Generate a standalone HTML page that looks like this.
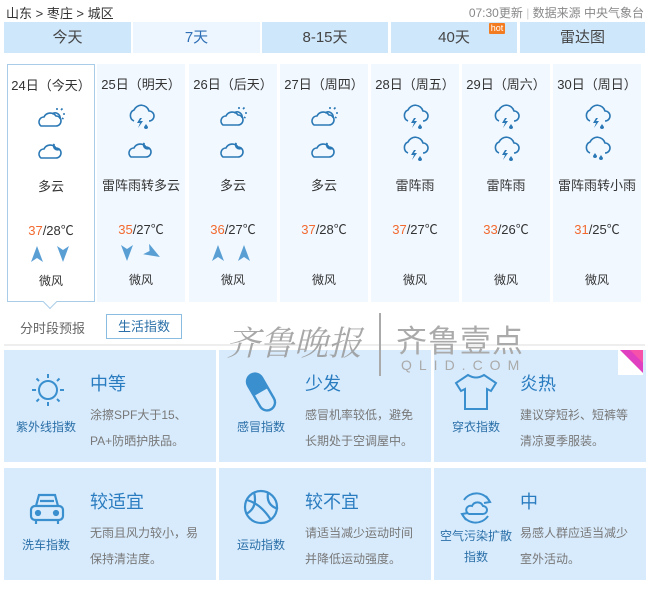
<!DOCTYPE html>
<html><head><meta charset="utf-8"><style>
*{margin:0;padding:0;box-sizing:border-box}
body{width:650px;height:590px;background:#fff;font-family:"Liberation Sans","Noto Sans CJK SC",sans-serif;color:#333;position:relative;overflow:hidden}
.a{position:absolute}
.crumb{left:6px;top:3px;font-size:13px;color:#333}
.upd{right:6px;top:4px;font-size:12px;color:#888}
.tab{top:22px;height:31px;background:#cfe7fb;text-align:center;line-height:31px;font-size:15px;color:#444}
.card{top:64px;width:88px;height:238px;background:#f1f8ff;text-align:center}
.card .d{position:absolute;top:10px;left:0;right:0;font-size:13px;color:#333}
.card .w{position:absolute;top:111px;left:0;right:0;font-size:13px}
.card .t{position:absolute;top:155px;left:0;right:0;font-size:13px}
.card .t b{font-weight:normal;color:#f26a2f}
.card .wd{position:absolute;top:207px;left:0;right:0;font-size:12px}
.card .ar{position:absolute;top:181px;left:0;right:0;height:16px}
.ic{position:absolute;left:50%;margin-left:-16px}
.box{background:#d8ebfc;width:212px;height:112px}
.box .n{position:absolute;left:0;width:84px;text-align:center;font-size:12px;color:#2a6fa8}
.box .h{position:absolute;left:86px;top:20px;font-size:18px;color:#2a7cc0}
.box .p{position:absolute;left:86px;top:52px;font-size:12px;color:#777;line-height:26px;width:118px}
.box svg{position:absolute}
</style></head><body>
<svg width="0" height="0" style="position:absolute">
<defs>
<symbol id="cs" viewBox="0 0 32 24"><g fill="none" stroke="#2a78b5" stroke-width="1.6"><path d="M6 21h15a5 5 0 0 0 0-10 7 7 0 0 0-12 1 5 5 0 0 0-3 9z"/><path d="M17 9a5 5 0 0 1 8 5"/><path d="M22 3v2M28 9h2M26 5l1.5-1.5M27 13l1.5 1"/></g></symbol>
<symbol id="cm" viewBox="0 0 32 24"><g fill="none" stroke="#2a78b5" stroke-width="1.6"><path d="M6 21h15a5 5 0 0 0 0-10 7 7 0 0 0-12 1 5 5 0 0 0-3 9z"/><path d="M19 9a4 4 0 0 0 6 3 4 4 0 0 1-6-5z"/></g></symbol>
<symbol id="th" viewBox="0 0 32 28"><g fill="none" stroke="#2a78b5" stroke-width="1.6"><path d="M9 19a6 6 0 0 1 0-11 8 8 0 0 1 15 1 5 5 0 0 1 0 10"/></g><path d="M15 16l-3 5h3l-2 5 5-7h-3l2-3z" fill="#2a78b5"/><path d="M21 22l2 3a2 2 0 0 1-4 0z" fill="#2a78b5"/></symbol>
<symbol id="rn" viewBox="0 0 32 28"><g fill="none" stroke="#2a78b5" stroke-width="1.6"><path d="M9 19a6 6 0 0 1 0-11 8 8 0 0 1 15 1 5 5 0 0 1 0 10"/></g><path d="M14 19l2 3a2 2 0 0 1-4 0zM20 21l2 3a2 2 0 0 1-4 0z" fill="#2a78b5"/></symbol>
<symbol id="up" viewBox="0 0 12 16"><path d="M6 0L12 16 6 12 0 16z" fill="#5a9fd4"/></symbol>
</defs></svg>

<div class="a crumb">山东 &gt; 枣庄 &gt; 城区</div>
<div class="a upd">07:30更新 <span style="color:#ccc">|</span> 数据来源 中央气象台</div>

<div class="a tab" style="left:4px;width:127px">今天</div>
<div class="a tab" style="left:133px;width:127px;background:#edf6ff;color:#2f6fb5">7天</div>
<div class="a tab" style="left:262px;width:126px">8-15天</div>
<div class="a tab" style="left:391px;width:126px">40天</div>
<div class="a" style="left:489px;top:23px;width:16px;height:11px;background:#f47c20;color:#fff;font-size:9px;line-height:11px;text-align:center;border-radius:1px">hot</div>
<div class="a tab" style="left:520px;width:125px">雷达图</div>

<div class="a card" style="left:7px;background:#fff;border:1.5px solid #a9cde8">
<div class="d">24日（今天）</div>
<svg class="ic" style="top:40px" width="32" height="24"><use href="#cs"/></svg>
<svg class="ic" style="top:72px" width="32" height="24"><use href="#cm"/></svg>
<div class="w">多云</div><div class="t"><b>37</b>/28℃</div>
<div class="ar"><svg style="position:absolute;left:23px" width="12" height="16"><use href="#up"/></svg><svg style="position:absolute;left:49px;transform:rotate(180deg)" width="12" height="16"><use href="#up"/></svg></div>
<div class="wd">微风</div></div>
<div class="a" style="left:45px;top:297px;width:10px;height:10px;background:#fff;border-right:1.5px solid #a9cde8;border-bottom:1.5px solid #a9cde8;transform:rotate(45deg)"></div>

<div class="a card" style="left:97px"><div class="d">25日（明天）</div>
<svg class="ic" style="top:38px" width="32" height="28"><use href="#th"/></svg>
<svg class="ic" style="top:72px" width="32" height="24"><use href="#cm"/></svg>
<div class="w">雷阵雨转多云</div><div class="t"><b>35</b>/27℃</div>
<div class="ar"><svg style="position:absolute;left:24px;transform:rotate(180deg)" width="12" height="16"><use href="#up"/></svg><svg style="position:absolute;left:50px;transform:rotate(120deg)" width="12" height="16"><use href="#up"/></svg></div>
<div class="wd">微风</div></div>

<div class="a card" style="left:189px"><div class="d">26日（后天）</div>
<svg class="ic" style="top:40px" width="32" height="24"><use href="#cs"/></svg>
<svg class="ic" style="top:72px" width="32" height="24"><use href="#cm"/></svg>
<div class="w">多云</div><div class="t"><b>36</b>/27℃</div>
<div class="ar"><svg style="position:absolute;left:23px" width="12" height="16"><use href="#up"/></svg><svg style="position:absolute;left:49px" width="12" height="16"><use href="#up"/></svg></div>
<div class="wd">微风</div></div>

<div class="a card" style="left:280px"><div class="d">27日（周四）</div>
<svg class="ic" style="top:40px" width="32" height="24"><use href="#cs"/></svg>
<svg class="ic" style="top:72px" width="32" height="24"><use href="#cm"/></svg>
<div class="w">多云</div><div class="t"><b>37</b>/28℃</div><div class="wd">微风</div></div>

<div class="a card" style="left:371px"><div class="d">28日（周五）</div>
<svg class="ic" style="top:38px" width="32" height="28"><use href="#th"/></svg>
<svg class="ic" style="top:70px" width="32" height="28"><use href="#th"/></svg>
<div class="w">雷阵雨</div><div class="t"><b>37</b>/27℃</div><div class="wd">微风</div></div>

<div class="a card" style="left:462px"><div class="d">29日（周六）</div>
<svg class="ic" style="top:38px" width="32" height="28"><use href="#th"/></svg>
<svg class="ic" style="top:70px" width="32" height="28"><use href="#th"/></svg>
<div class="w">雷阵雨</div><div class="t"><b>33</b>/26℃</div><div class="wd">微风</div></div>

<div class="a card" style="left:553px"><div class="d">30日（周日）</div>
<svg class="ic" style="top:38px" width="32" height="28"><use href="#th"/></svg>
<svg class="ic" style="top:70px" width="32" height="28"><use href="#rn"/></svg>
<div class="w">雷阵雨转小雨</div><div class="t"><b>31</b>/25℃</div><div class="wd">微风</div></div>

<div class="a" style="left:20px;top:318px;font-size:13px;color:#666">分时段预报</div>
<div class="a" style="left:106px;top:314px;width:76px;height:25px;border:1px solid #8bbde3;font-size:13px;color:#2a6fa8;text-align:center;line-height:23px">生活指数</div>
<div class="a" style="left:4px;top:344px;width:641px;height:2px;background:#eee"></div>

<div class="a box" style="left:4px;top:350px"><svg style="left:26px;top:22px" width="36" height="36" viewBox="0 0 36 36" fill="none" stroke="#3a8fcf" stroke-width="2"><circle cx="18" cy="18" r="9"/><path d="M18 2v4M18 30v4M2 18h4M30 18h4M6.5 6.5l2.5 2.5M27 27l2.5 2.5M6.5 29.5l2.5-2.5M27 9l2.5-2.5"/></svg><div class="n" style="top:68px">紫外线指数</div><div class="h">中等</div><div class="p">涂擦SPF大于15、PA+防晒护肤品。</div></div>
<div class="a box" style="left:219px;top:350px"><svg style="left:22px;top:20px" width="40" height="44" viewBox="0 0 40 44"><g transform="rotate(-30 20 22)"><rect x="12" y="2" width="16" height="40" rx="8" fill="none" stroke="#3a8fcf" stroke-width="2.4"/><path d="M12 22V10a8 8 0 0 1 16 0v12z" fill="#3a8fcf"/></g></svg><div class="n" style="top:68px">感冒指数</div><div class="h">少发</div><div class="p">感冒机率较低，避免长期处于空调屋中。</div></div>
<div class="a box" style="left:434px;top:350px"><svg style="left:20px;top:22px" width="44" height="40" viewBox="0 0 44 40" fill="none" stroke="#3a8fcf" stroke-width="2"><path d="M14 3l-12 8 5 8 4-2v20h22V17l4 2 5-8-12-8q-8 5-16 0z"/></svg><div class="n" style="top:68px">穿衣指数</div><div class="h">炎热</div><div class="p">建议穿短衫、短裤等清凉夏季服装。</div></div>
<div class="a" style="left:618px;top:350px;width:25px;height:25px;background:#fff"><svg width="25" height="25"><path d="M2 0h23v23z" fill="#e040c0"/><path d="M12 0h13v13z" fill="#ff5aa0" opacity=".7"/></svg></div>

<div class="a box" style="left:4px;top:468px"><svg style="left:24px;top:22px" width="38" height="38" viewBox="0 0 38 38" fill="none" stroke="#3a8fcf" stroke-width="2.2"><path d="M8 16l3-11h16l3 11"/><rect x="3" y="16" width="32" height="14" rx="4"/><path d="M8 30v4M30 30v4M12 11h14"/><circle cx="10" cy="23" r="2" fill="#3a8fcf"/><circle cx="28" cy="23" r="2" fill="#3a8fcf"/></svg><div class="n" style="top:68px">洗车指数</div><div class="h">较适宜</div><div class="p">无雨且风力较小，易保持清洁度。</div></div>
<div class="a box" style="left:219px;top:468px"><svg style="left:23px;top:20px" width="38" height="38" viewBox="0 0 38 38" fill="none" stroke="#3a8fcf" stroke-width="2.2"><circle cx="19" cy="19" r="16"/><path d="M5 12q14 4 24 20M12 4q4 16 -8 22M26 5q-2 12 10 16"/></svg><div class="n" style="top:68px">运动指数</div><div class="h">较不宜</div><div class="p">请适当减少运动时间并降低运动强度。</div></div>
<div class="a box" style="left:434px;top:468px"><svg style="left:22px;top:20px" width="40" height="40" viewBox="0 0 40 40" fill="none" stroke="#3a8fcf" stroke-width="2"><path d="M8 12a15 15 0 0 1 26 2M32 28a15 15 0 0 1-26-2"/><path d="M30 8l4 6-6 1M10 32l-4-6 6-1"/><path d="M13 26h14a4 4 0 0 0 0-8 6 6 0 0 0-11 0 4 4 0 0 0-3 8z"/></svg><div class="n" style="top:58px;line-height:21px">空气污染扩散<br>指数</div><div class="h">中</div><div class="p">易感人群应适当减少室外活动。</div></div>

<div class="a" style="left:226px;top:316px;font-size:34px;color:#999;font-family:'Noto Serif CJK SC',serif;font-style:italic;opacity:.85">齐鲁晚报</div>
<div class="a" style="left:379px;top:313px;width:2px;height:63px;background:#aaa"></div>
<div class="a" style="left:396px;top:316px;font-size:31px;color:#aaa;letter-spacing:1px">齐鲁壹点</div>
<div class="a" style="left:401px;top:357px;font-size:14px;color:#aaa;letter-spacing:7px">QLID.COM</div>
</body></html>
